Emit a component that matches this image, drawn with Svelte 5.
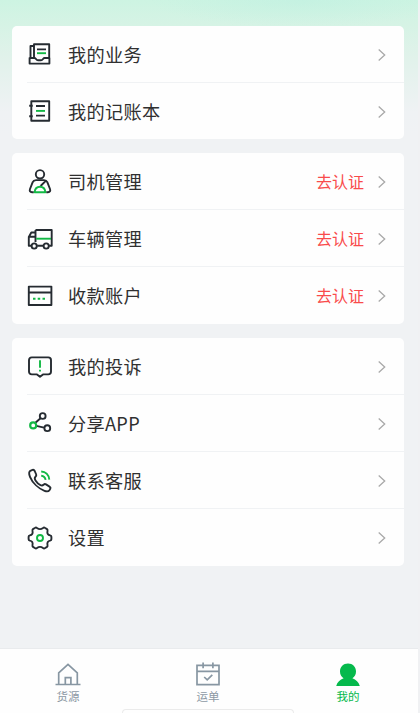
<script>
  const groups = [
    [{ icon: 'business', label: '我的业务' }, { icon: 'book', label: '我的记账本' }],
    [
      { icon: 'driver', label: '司机管理', note: '去认证' },
      { icon: 'truck', label: '车辆管理', note: '去认证' },
      { icon: 'card', label: '收款账户', note: '去认证' }
    ],
    [
      { icon: 'complaint', label: '我的投诉' },
      { icon: 'share', label: '分享APP' },
      { icon: 'phone', label: '联系客服' },
      { icon: 'gear', label: '设置' }
    ]
  ];
  const tabs = [
    { icon: 'home', label: '货源' },
    { icon: 'order', label: '运单' },
    { icon: 'user', label: '我的', active: true }
  ];
</script>

<div class="page">
  <main>
    {#each groups as rows}
      <section class="card">
        {#each rows as row}
          <div class="row">
            <svg class="icon" viewBox="0 0 28 28">
              {#if row.icon === 'business'}
                <path d="M8 17.5V4.2H23.2V17.5M8 6H4.5V17.5M3.6 18H8.5C10 18 10 20.3 12 20.3H15C17 20.3 17 18 18.5 18H23.4V23.6H3.6ZM11 9.4H20M23.2 17.5V19M8 17V18.5" />
                <path class="green" d="M11 13.2H20" />
              {:else if row.icon === 'book'}
                <path d="M5.3 4.2H23.2V23.7H5.3ZM3.2 8.8H6.8M3.2 19.2H6.8M10 9H19M10 18.6H19" />
                <path class="green" d="M10 13.9H19" />
              {:else if row.icon === 'driver'}
                <circle cx="14" cy="6.3" r="4.2" />
                <path d="M7.8 24.3H6C4 24.3 3.3 22.8 4 21L6.7 14.2C7.4 12.5 8.3 12.1 10 12.1H18C19.7 12.1 20.6 12.5 21.3 14.2L24 21C24.7 22.8 24 24.3 22 24.3H20.2M20 12.6L14.6 18" />
                <path class="green" d="M8.6 24.3C9 20.5 11 18.8 14 18.8S19 20.5 19.4 24.3Z" />
              {:else if row.icon === 'truck'}
                <path d="M9.5 5H25.7V20.7H23.2M17.2 20.7H11.2M9.5 5V17M9.2 7.5H5.3L2.8 12V20.7H5.2M3 11.8H9" />
                <path class="green" d="M10.2 13.7H25" />
                <circle cx="8.2" cy="21" r="2.6" /><circle cx="20.2" cy="21" r="2.6" />
              {:else if row.icon === 'card'}
                <path d="M2.8 4.6H25.4V23H2.8ZM2.8 10.5H25.4" />
                <path class="green" d="M7 16.7H9.5M11.7 16.7H14.2M16.5 16.7H19" />
              {:else if row.icon === 'complaint'}
                <path d="M5.8 4.4H22.2Q25 4.4 25 7.2V18.6Q25 21.4 22.2 21.4H17L14 23.8L11 21.4H5.8Q3 21.4 3 18.6V7.2Q3 4.4 5.8 4.4Z" />
                <path class="green" d="M14 7.2V14.7M14 16.8V18.6" />
              {:else if row.icon === 'share'}
                <path d="M9.4 12.8L14.5 8.2M10.4 15.9L18 17.6" />
                <circle cx="16.7" cy="6" r="2.9" /><circle cx="21.3" cy="18.2" r="2.9" />
                <circle class="green heavy" cx="7.2" cy="15.4" r="3" />
              {:else if row.icon === 'phone'}
                <path d="M4.3 3.8L6.5 2.9C7.5 2.5 8.2 3 8.7 4L10.2 7.5C10.7 8.7 10 9.3 9.3 10C8.3 11.1 8.6 12 9.5 13.4C10.8 15.5 12.4 17 14.5 18.1C15.8 18.7 16.5 18.7 17.5 17.8C18.2 17.1 19 16.8 20 17.4L23.5 19.6C24.4 20.2 24.8 20.8 24.4 21.6L23.4 23.2C22.6 24.4 21 24.7 18.5 23.8C12.5 21.5 6.5 15.8 4 9.8C2.7 6.6 3 4.7 4.3 3.8Z" />
                <path class="green" d="M15.2 4.5C19.5 4.6 22.8 7.8 23.3 12.6M15.2 8.7C17.7 8.9 19.2 10.4 19.6 12.9" />
              {:else if row.icon === 'gear'}
                <path d="M9.2 3.8Q10 3.2 11 4Q14 6.2 17 4Q18 3.2 18.8 3.8L21 5.1Q21.8 5.7 21.5 7C20.9 9.5 22 11 24.1 11.4Q25.4 11.7 25.4 12.8V15.2Q25.4 16.3 24.1 16.6C22 17 20.9 18.5 21.5 21Q21.8 22.3 21 22.9L18.8 24.2Q18 24.8 17 24Q14 21.8 11 24Q10 24.8 9.2 24.2L7 22.9Q6.2 22.3 6.5 21C7.1 18.5 6 17 3.9 16.6Q2.6 16.3 2.6 15.2V12.8Q2.6 11.7 3.9 11.4C6 11 7.1 9.5 6.5 7Q6.2 5.7 7 5.1Z" />
                <circle class="green" cx="14" cy="14" r="3" />
              {/if}
            </svg>
            <div class="body">
              <span class="label">{row.label}</span>
              {#if row.note}<span class="note">{row.note}</span>{/if}
              <svg class="arrow" viewBox="0 0 10 14"><path d="M1.7 1.5L7.7 7L1.7 12.5" /></svg>
            </div>
          </div>
        {/each}
      </section>
    {/each}
  </main>

  <nav>
    {#each tabs as tab}
      <div class="tab" class:active={tab.active}>
        <svg viewBox="0 0 28 28">
          {#if tab.icon === 'home'}
            <path d="M1.5 24.5H26.5M4.7 24.5V12.8L14 4.3L23.3 12.8V24.5M11.3 24.5V17.7H16.9V24.5" />
          {:else if tab.icon === 'order'}
            <path d="M3 5.4H25V24.6H3ZM3 11.3H25M9.1 2.5V8.2M18.9 2.5V8.2M10.2 17L13.2 19.8L18.3 14.8" />
          {:else}
            <path class="solid" d="M14 3.5C18.7 3.5 22 7 22 11.5C22 14.5 20.6 17 18.4 18.3C22 19.7 24.7 22.2 25.8 26H2.2C3.3 22.2 6 19.7 9.6 18.3C7.4 17 6 14.5 6 11.5C6 7 9.3 3.5 14 3.5Z" />
          {/if}
        </svg>
        <span>{tab.label}</span>
      </div>
    {/each}
    <div class="handle"></div>
  </nav>
</div>

<style>
  .page {
    width: 420px;
    height: 713px;
    box-sizing: border-box;
    display: flex;
    flex-direction: column;
    overflow: hidden;
    border-right: 2px solid #f0f1f3;
    background: radial-gradient(ellipse 150px 28px at 300px 0, rgba(190, 240, 225, 0.55), transparent),
      linear-gradient(#cdf4e2 0, #d6f3e5 25px, #e0f2ea 55px, #eff2f4 112px, #f0f2f4 135px);
    font-family: "Noto Sans CJK SC", sans-serif;
  }
  main {
    flex: 1;
    padding: 26px 14px 0 12px;
    display: flex;
    flex-direction: column;
    gap: 14px;
  }
  .card {
    background: #fefefe;
    border-radius: 5px;
  }
  .row {
    height: 57px;
    display: flex;
    align-items: center;
    padding-left: 14px;
  }
  .card:first-child .row { height: 56.7px; }
  .card:nth-child(2) .row { height: 56.9px; }
  .icon {
    width: 28px;
    height: 28px;
    flex: none;
    fill: none;
    stroke: #252b31;
    stroke-width: 1.9;
    stroke-linejoin: round;
  }
  .icon .green { stroke: #12b844; }
  .icon .heavy { stroke-width: 2.2; }
  .body {
    position: relative;
    flex: 1;
    height: 100%;
    display: flex;
    align-items: center;
    padding: 0 17px 0 14px;
  }
  .row:not(:last-child) .body::after {
    content: "";
    position: absolute;
    left: -27px;
    right: 0;
    bottom: 0;
    height: 1px;
    background: #f0f2f4;
  }
  .label {
    flex: 1;
    font-size: 18.2px;
    letter-spacing: 0.3px;
    line-height: 26px;
    margin-bottom: 1px;
    color: #303030;
  }
  .note {
    font-size: 16px;
    line-height: 24px;
    color: #f94b4b;
    margin: 0 13px 1px 0;
  }
  .arrow {
    width: 10px;
    height: 14px;
    margin-top: 1px;
    fill: none;
    stroke: #a9a9a9;
    stroke-width: 1.3;
  }
  nav {
    position: relative;
    height: 65px;
    flex: none;
    display: flex;
    background: #fefefe;
    border-top: 1px solid #e9ebed;
    box-sizing: border-box;
  }
  .tab {
    width: 140px;
    flex: none;
    box-sizing: border-box;
    display: flex;
    flex-direction: column;
    align-items: center;
    padding: 11px 4px 0 0;
    color: #8d99a4;
    font-size: 11.5px;
    line-height: 16px;
  }
  .tab svg {
    width: 28px;
    height: 28px;
    fill: none;
    stroke: #8796a2;
    stroke-width: 1.7;
  }
  .tab .solid { fill: #05b94c; stroke: none; }
  .active { color: #05b94c; }
  .handle {
    position: absolute;
    left: 122px;
    bottom: 0;
    width: 172px;
    height: 4px;
    box-sizing: border-box;
    border: 1px solid #ebebeb;
    border-bottom: 0;
    border-radius: 4px 4px 0 0;
  }
</style>
